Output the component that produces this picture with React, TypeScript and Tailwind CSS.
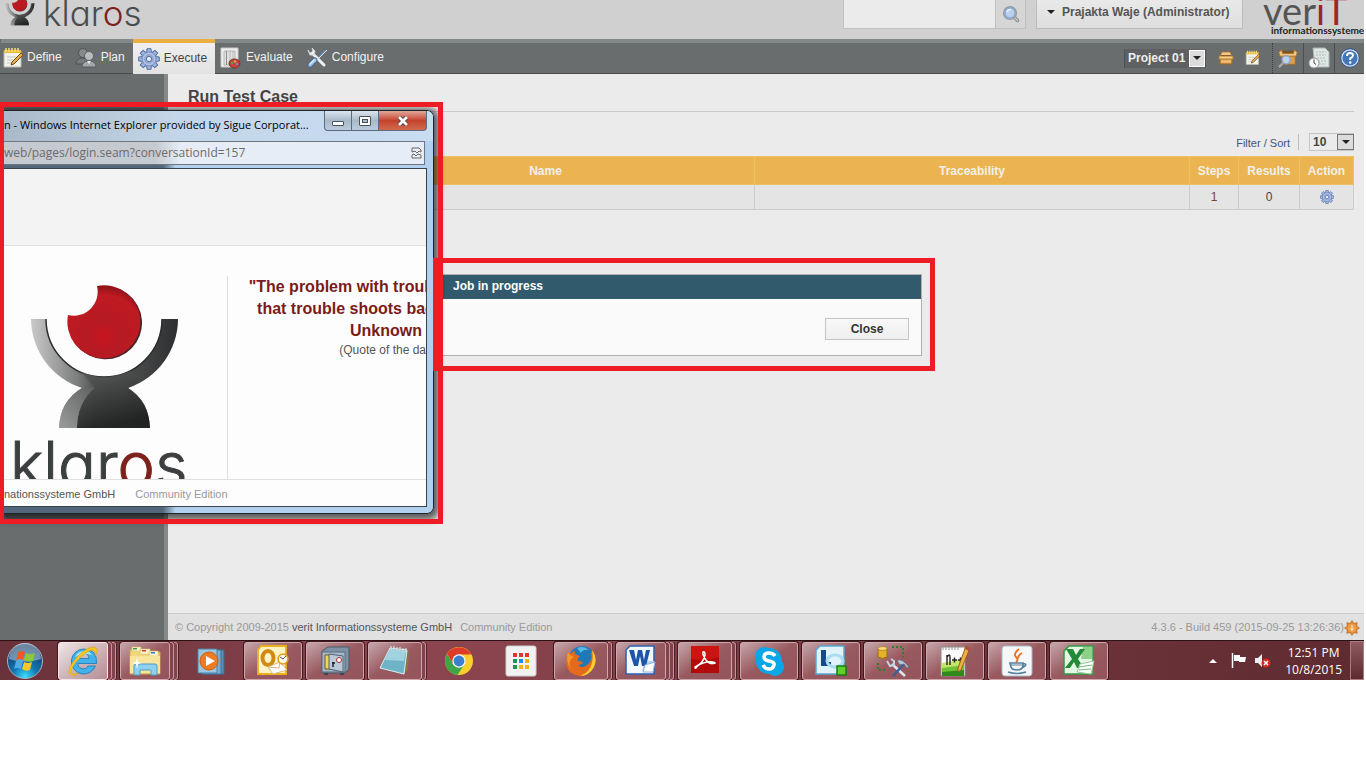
import React, { useId } from "react";

type IconProps = { className?: string };

/* ---------- logos ---------- */

function KlarosMark({ className }: IconProps) {
  const id = useId();
  return (
    <svg className={className} viewBox="0 0 149 146" aria-hidden="true">
      <defs>
        <radialGradient id={`${id}r`} cx="0.5" cy="0.7" r="0.75">
          <stop offset="0" stopColor="#c8141f" />
          <stop offset="0.3" stopColor="#b51a22" />
          <stop offset="0.75" stopColor="#c01a22" />
          <stop offset="1" stopColor="#7a1014" />
        </radialGradient>
        <linearGradient id={`${id}g`} x1="0" x2="1" y1="0" y2="0">
          <stop offset="0" stopColor="#c9c9c9" />
          <stop offset="0.32" stopColor="#7b7c7c" />
          <stop offset="0.42" stopColor="#555758" />
          <stop offset="0.75" stopColor="#444647" />
          <stop offset="1" stopColor="#2c2e2f" />
        </linearGradient>
        <linearGradient id={`${id}b`} x1="0" x2="0.3" y1="0" y2="1">
          <stop offset="0" stopColor="#5b5d5d" />
          <stop offset="1" stopColor="#1c1e1e" />
        </linearGradient>
        <linearGradient id={`${id}l`} x1="1" x2="0" y1="0" y2="1">
          <stop offset="0" stopColor="#606262" />
          <stop offset="1" stopColor="#9a9c9c" />
        </linearGradient>
      </defs>
      <path d="M67.500 3A36.500 36.500 0 1 1 38.500 33A24 24 0 0 0 67.500 3Z" fill="#3a0c0e" opacity="0.9" />
      <path d="M66 2A36.500 36.500 0 1 1 37 31A24 24 0 0 0 66 2Z" fill={`url(#${id}r)`} />
      <path d="M0 35H15A58 58 0 0 0 131 35H147A73 73 0 0 1 97 104Q118 117 119 144H28Q29 117 51 104A73 73 0 0 1 0 35Z" fill={`url(#${id}g)`} />
      <path d="M15 35A58 58 0 0 0 73 93A58 58 0 0 0 131 35" fill="none" stroke="#2b2d2d" strokeWidth="1.500" />
      <path d="M50 88L64 104Q46 119 46 144H119Q118 117 97 104Q104 101 110 97L100 87Q73 98 50 88Z" fill={`url(#${id}b)`} opacity="0.85" />
      <path d="M51 104H63Q46 119 46 144H28Q29 117 51 104Z" fill={`url(#${id}l)`} />
    </svg>
  );
}

function Wordmark({ className }: IconProps) {
  return (
    <span className={`font-['Inter',sans-serif] [font-feature-settings:'cv11'] ${className}`}>
      klar<span className="text-[#7d211d]">o</span>s
    </span>
  );
}

/* ---------- application icons ---------- */

function NoteIcon({ className }: IconProps) {
  return (
    <svg className={className} viewBox="0 0 22 22" aria-hidden="true">
      <path d="M3 4H20V20H3Z" fill="#f4f4ee" stroke="#b9b9ae" />
      <path d="M3 3H20V6H3Z" fill="#e9b93a" />
      <path d="M5 1V5M8 1V5M11 1V5M14 1V5M17 1V5" stroke="#fbe27a" strokeWidth="1.500" />
      <path d="M6 10H15M6 13H12M6 16H10" stroke="#c3c3c3" />
      <path d="M20 6L22 8L13 17L10 18L11 15Z" fill="#e7a846" stroke="#76501e" />
    </svg>
  );
}

function PeopleIcon({ className }: IconProps) {
  return (
    <svg className={className} viewBox="0 0 22 22" aria-hidden="true">
      <circle cx="8" cy="6" r="4.500" fill="#85898b" stroke="#505354" />
      <path d="M1 17Q1 11 8 11Q13 11 13 17Z" fill="#777b7d" stroke="#505354" />
      <circle cx="14" cy="9" r="4.500" fill="#b9bcbe" stroke="#606364" />
      <path d="M7 20Q7 14 14 14Q21 14 21 20Z" fill="#a4a7a9" stroke="#5a5d5e" />
      <path d="M12 14L14 17L16 14Z" fill="#eee" />
    </svg>
  );
}

function GearIcon({ className }: IconProps) {
  const teeth = [0, 45, 90, 135, 180, 225, 270, 315];
  return (
    <svg className={className} viewBox="0 0 22 22" aria-hidden="true">
      <g fill="#a3b5da" stroke="#4f6fa8" strokeWidth="1">
        {teeth.map((a) => (
          <path key={a} d="M8.500 5L9 0.700H13L13.500 5Z" transform={`rotate(${a} 11 11)`} />
        ))}
      </g>
      <circle cx="11" cy="11" r="7" fill="#b4c3e2" stroke="#6683b8" strokeWidth="0.800" />
      <circle cx="11" cy="11" r="5" fill="#93a9d4" />
      <circle cx="11" cy="11" r="2.600" fill="#eceef3" stroke="#4f6fa8" />
    </svg>
  );
}

function ReportIcon({ className }: IconProps) {
  return (
    <svg className={className} viewBox="0 0 22 22" aria-hidden="true">
      <path d="M1 1H18V20H1Z" fill="#efefef" stroke="#c9c9c9" />
      <path d="M4 4H15V18H4Z" fill="#e0e0e0" stroke="#b5b5b5" />
      <path d="M6.500 4V18" stroke="#8d8d8d" />
      <path d="M10 4V18M13 4V18" stroke="#bcbcbc" />
      <ellipse cx="14.500" cy="16.500" rx="5.500" ry="4.500" fill="#c4433c" stroke="#7c2a28" />
      <circle cx="12" cy="16" r="1.200" fill="#5aa145" />
      <circle cx="15" cy="14.500" r="1.200" fill="#e9a24a" />
      <circle cx="17" cy="17" r="1.200" fill="#6a8bd0" />
    </svg>
  );
}

function ToolsIcon({ className }: IconProps) {
  return (
    <svg className={className} viewBox="0 0 22 22" aria-hidden="true">
      <path d="M20 3L11 12" stroke="#5e87b8" strokeWidth="1.800" />
      <path d="M21 3L12 12" stroke="#dfe8f2" strokeWidth="1" />
      <path d="M6 6L18 18" stroke="#f0f0f0" strokeWidth="3" strokeLinecap="round" />
      <path d="M2 3L4 8L8 8L9 4L6 1L7 4L5 6L3 5Z" fill="#f0f0f0" stroke="#d3d3d3" />
      <path d="M4 18L9 13" stroke="#38699f" strokeWidth="5" strokeLinecap="round" />
      <path d="M4 18L9 13" stroke="#a4c4e6" strokeWidth="3.200" strokeLinecap="round" />
      <path d="M4 17L8 13" stroke="#e4eefa" strokeWidth="1.200" strokeLinecap="round" />
    </svg>
  );
}

function BoxIcon({ className }: IconProps) {
  return (
    <svg className={className} viewBox="0 0 16 16" aria-hidden="true">
      <path d="M2 7L4 2H12L14 7V13Q14 14 13 14H3Q2 14 2 13Z" fill="#d9a04f" stroke="#9b6a24" />
      <path d="M4 2.500H12L13 5H3Z" fill="#f0c888" />
      <path d="M3 5H13V6H3Z" fill="#5d4018" />
      <path d="M1 6H15V9H1Z" fill="#f4cd8c" stroke="#b07a2e" />
      <path d="M3 11.500H13" stroke="#efc27c" strokeWidth="2" />
    </svg>
  );
}

function BoxSearchIcon({ className }: IconProps) {
  return (
    <svg className={className} viewBox="0 0 22 22" aria-hidden="true">
      <path d="M4 8V18H19V8Z" fill="#d9a04f" stroke="#9b6a24" />
      <path d="M4 3H18L17 6H5Z" fill="#7b5421" />
      <path d="M1 5L4 2L5 6H17L18 2L21 5L20 9H2Z" fill="#f1c680" stroke="#a8732a" />
      <path d="M5 17L1 21" stroke="#a9a9a9" strokeWidth="2.500" />
      <circle cx="9" cy="13" r="4.500" fill="#b8d2f0" stroke="#8aa3c6" strokeWidth="1.500" />
    </svg>
  );
}

function ClockPageIcon({ className }: IconProps) {
  return (
    <svg className={className} viewBox="0 0 22 22" aria-hidden="true">
      <path d="M5 1H17L21 5V20H7Z" fill="#dfe7e5" stroke="#a9b6b4" />
      <path d="M8 5H18M8 8H18M9 11H18M10 14H18M11 17H18" stroke="#a7bdb8" strokeDasharray="2 1" />
      <circle cx="6" cy="16" r="5" fill="#f7f7f7" stroke="#9c9c9c" />
      <path d="M6 12.500V16L8 17.500" fill="none" stroke="#444" />
    </svg>
  );
}

function HelpIcon({ className }: IconProps) {
  return (
    <svg className={className} viewBox="0 0 20 20" aria-hidden="true">
      <circle cx="10" cy="10" r="9.300" fill="#d5e3f5" stroke="#284f8c" />
      <circle cx="10" cy="10" r="7.600" fill="#4477b8" />
      <path d="M7 8Q7 5 10 5Q13 5 13 7.500Q13 9 10.200 10.300V12" fill="none" stroke="#fff" strokeWidth="1.900" />
      <circle cx="10.200" cy="14.500" r="1.200" fill="#fff" />
    </svg>
  );
}

function SearchIcon({ className }: IconProps) {
  return (
    <svg className={className} viewBox="0 0 18 18" aria-hidden="true">
      <path d="M12 12L15.500 15.500" stroke="#8b8b8b" strokeWidth="3.500" strokeLinecap="round" />
      <path d="M12 12L15.500 15.500" stroke="#c9c9c9" strokeWidth="1.500" strokeLinecap="round" />
      <circle cx="8" cy="8" r="6.300" fill="#b7cfea" stroke="#969ba2" strokeWidth="1.600" />
      <circle cx="8" cy="8" r="5" fill="none" stroke="#7ba0d0" />
      <path d="M5 7Q6 4.500 9 4.500" fill="none" stroke="#eef5fd" strokeWidth="1.500" />
    </svg>
  );
}

function SunIcon({ className }: IconProps) {
  return (
    <svg className={className} viewBox="0 0 16 16" aria-hidden="true">
      {[0, 45, 90, 135, 180, 225, 270, 315].map((a) => (
        <path key={a} d="M5 5L8 0.500L11 5Z" fill="#e58a32" stroke="#b5621b" strokeWidth="0.600" transform={`rotate(${a} 8 8)`} />
      ))}
      <circle cx="8" cy="8" r="4.700" fill="#ee9b44" />
      <path d="M8 5V10M6.500 8.500L8 10.500L9.500 8.500" stroke="#fff2d8" fill="none" />
    </svg>
  );
}

function DownArrow({ className }: IconProps) {
  return (
    <svg className={className} viewBox="0 0 8 4" aria-hidden="true">
      <path d="M0 0H8L4 4Z" fill="#222" />
    </svg>
  );
}

/* ---------- taskbar icons (32 × 32) ---------- */

const taskIcons: Record<string, React.ReactNode> = {
  "Internet Explorer": (
    <>
      <path d="M16.500 4A12.500 12.500 0 1 0 28.500 21H21A5.500 5.500 0 0 1 10.700 18.500H29.500Q30.500 4 16.500 4ZM10.700 13.500A5.500 5.500 0 0 1 22 13.500Z" fill="#43b2ea" stroke="#1779b8" strokeWidth="0.800" fillRule="evenodd" />
      <path d="M8 12Q11 6 17 6Q23 6 25 10Q17 7 8 12Z" fill="#a6e0fa" />
      <path d="M4 30Q-2 26 10 12Q23 -1 29 3Q32 6 28 11Q29 5 25 5Q19 6 9 17Q2 26 5 28.500Q8 30 12 28Q7 32 4 30Z" fill="#f8c81c" stroke="#d09a06" strokeWidth="0.500" />
    </>
  ),
  "File Explorer": (
    <>
      <path d="M1 5H10L12 7H31V29H1Z" fill="#f0d77e" stroke="#c9a548" />
      <path d="M3 2H12V6H3ZM11 4H21V9H11ZM20 6H29V11H20Z" fill="#fff6d0" stroke="#d8bd68" strokeWidth="0.600" />
      <path d="M4 3H8V4.500H4Z" fill="#2aa13a" />
      <path d="M13 5H17V6.500H13Z" fill="#d5382a" />
      <path d="M22 7H26V8.500H22Z" fill="#2a7ad5" />
      <path d="M1 11H31V28H1Z" fill="#f7e59c" />
      <path d="M5 30V21Q5 19 7 19H26Q28 19 28 21V30H22V25H11V30Z" fill="#8ed0ef" stroke="#4e9bc8" />
      <path d="M8 12L9 17L13 18L9 19L8 24L7 19L3 18L7 17Z" fill="#fff" />
    </>
  ),
  "Media Player": (
    <>
      <path d="M11 5H29V29H11Z" fill="#5a8fb5" stroke="#35698f" />
      <path d="M7 5H26V29H7Z" fill="#79add0" stroke="#3e7399" />
      <path d="M3 4H22V28H3Z" fill="#9cc6e0" stroke="#4a80a5" />
      <circle cx="14" cy="16" r="9" fill="#ee7a22" stroke="#d05d10" />
      <path d="M11 11L20 16L11 21Z" fill="#fff" />
    </>
  ),
  Outlook: (
    <>
      <path d="M4 1H29V29H1V5Z" fill="#fff2c4" stroke="#eab11c" strokeWidth="1.800" />
      <ellipse cx="11" cy="13" rx="5.500" ry="7" fill="none" stroke="#cf8a14" strokeWidth="4" />
      <path d="M11 22L23 17L30 25L16 29Z" fill="#fff" stroke="#d8b878" />
      <path d="M11 22L22 23L23 17" fill="none" stroke="#d8b878" />
      <circle cx="26" cy="14" r="5" fill="#fff8e4" stroke="#e0991c" strokeWidth="1.500" />
      <path d="M26 14L29 11M26 14L23 12" fill="none" stroke="#555" />
    </>
  ),
  Safe: (
    <>
      <path d="M3 6L9 2H30V24L26 28H3Z" fill="#7d92a6" stroke="#4a5a69" />
      <path d="M3 7H26V27H3Z" fill="#a5b7c8" stroke="#5b6c7c" />
      <path d="M6 10H14V24H6Z" fill="#f4d35a" stroke="#6c5b1f" />
      <path d="M10 9L24 11V27L10 24Z" fill="#b9c9d7" stroke="#526373" />
      <circle cx="20" cy="15" r="2.500" fill="#fff" stroke="#a82e2e" />
      <path d="M14 17V22M13 18H16" stroke="#222" strokeWidth="1.500" />
      <path d="M5 28H9V30H5ZM21 28H25V30H21Z" fill="#384552" />
    </>
  ),
  Notepad: (
    <>
      <path d="M13 3L30 6L29 25L24 29L3 23Z" fill="#8c7544" />
      <path d="M11 3L28 5L25 29L1 23Z" fill="#6fb4c6" stroke="#d8f0f5" />
      <path d="M11 4L27 6L25 16L6 15Z" fill="#b3e0e9" opacity="0.7" />
      <path d="M12 1V5M15 1V5M18 2V6M21 2V6M24 3V7M27 3V7" stroke="#ddd" strokeWidth="1.200" />
    </>
  ),
  Chrome: (
    <>
      <circle cx="16" cy="16" r="14" fill="#f9cf2c" />
      <path d="M4 8.700A14 14 0 0 0 14.500 30L21 20L16 22L10 19Z" fill="#3fa648" />
      <path d="M16 9.500H28.200A14 14 0 0 0 4 8.700L10.500 19.500Z" fill="#de3b2b" />
      <circle cx="16" cy="16" r="6.700" fill="#f4f4f4" />
      <circle cx="16" cy="16" r="5.400" fill="#3b7fd0" />
    </>
  ),
  "Chrome Apps": (
    <>
      <rect x="1" y="1" width="30" height="30" rx="2" fill="#f2f2f2" stroke="#cfcfcf" />
      <path d="M8 8H12V12H8ZM14 8H18V12H14ZM20 8H24V12H20Z" fill="#e6342a" />
      <path d="M8 14H12V18H8ZM8 20H12V24H8Z" fill="#14994f" />
      <path d="M14 14H18V18H14Z" fill="#1b8cf0" />
      <path d="M20 14H24V18H20ZM14 20H18V24H14ZM20 20H24V24H20Z" fill="#fbaf17" />
    </>
  ),
  Firefox: (
    <>
      <circle cx="17" cy="14" r="13" fill="#1f78b8" />
      <path d="M12 3Q19 0 24 5Q18 4 16 8Z" fill="#5bb9e6" />
      <path d="M27 5Q33 13 29 22Q24 31 15 31Q5 30 2 22Q0 14 3 7L5 9Q8 6 10 6Q9 9 12 10L15 11Q12 13 13 16Q17 16 18 18Q16 20 13 20Q17 24 22 20Q28 15 26 9Z" fill="#e66a1c" />
      <path d="M27 5Q33 13 29 22Q24 31 15 31Q23 28 26 21Q29 13 27 5Z" fill="#f8cf31" />
      <path d="M3 7Q0 16 6 24Q2 15 9 12Q5 11 3 7Z" fill="#f39a2c" />
    </>
  ),
  Word: (
    <>
      <path d="M5 1H29V29H1V5Z" fill="#f3f8ff" stroke="#2a62b5" strokeWidth="1.500" />
      <path d="M20 16H29V26H17Z" fill="#b9d2f2" />
      <path d="M4 5H9L11 15L13 5H17L19 15L21 5H25L21 21H17L15 11L13 21H9Z" fill="#1d55a8" />
      <path d="M20 20L30 17L28 27L18 27Z" fill="#fff" stroke="#8fb0dd" />
    </>
  ),
  "Adobe Reader": (
    <>
      <path d="M2 1H30V28H2Z" fill="#b30b0b" />
      <path d="M2 1H30V12Q16 16 2 14Z" fill="#e01b16" opacity="0.6" />
      <path d="M6 22Q14 19 16 10Q16 6 14 7Q13 9 17 15Q21 20 26 18Q25 16 18 17Q9 19 7 23Q6 24 6 22Z" fill="none" stroke="#fff" strokeWidth="1.500" />
    </>
  ),
  Skype: (
    <>
      <circle cx="11" cy="11" r="9" fill="#0aa7e8" />
      <circle cx="22" cy="22" r="9" fill="#0aa7e8" />
      <circle cx="16" cy="16" r="13" fill="#0aa7e8" />
      <path d="M22 11Q20 8 16 8Q11 8 11 12Q11 15 16 16Q22 17 21 20Q20 24 16 24Q12 24 10 20" fill="none" stroke="#fff" strokeWidth="3.500" />
    </>
  ),
  Lync: (
    <>
      <path d="M5 1H29V29H1V5Z" fill="#e0f3fb" stroke="#57a9cf" strokeWidth="1.500" />
      <path d="M6 5H11V17H16V21H6Z" fill="#174a88" />
      <ellipse cx="20" cy="16" rx="8" ry="6" fill="none" stroke="#a9dcf0" strokeWidth="3" />
      <path d="M22 21H31V30H22Z" fill="#5fd22a" stroke="#1d7a10" strokeWidth="1.500" />
    </>
  ),
  "System Tools": (
    <>
      <path d="M1 4V12Q6 15 10 12V4Z" fill="#e5b02b" stroke="#946c10" />
      <ellipse cx="5.500" cy="3.500" rx="4.500" ry="2" fill="#f8d976" stroke="#946c10" strokeWidth="0.600" />
      <path d="M15 2H26V12M1 18V25H10" fill="none" stroke="#2d7d2e" strokeWidth="1.800" strokeDasharray="2 2" />
      <path d="M15 19L28 31" stroke="#dfe5ee" strokeWidth="2.500" />
      <path d="M10 16L13 21L17 20L17 16L14 14" fill="none" stroke="#c7d2e0" strokeWidth="2" />
      <path d="M27 19L16 31" stroke="#3a5f9a" strokeWidth="2.500" />
      <path d="M20 16Q24 12 32 22L30 23L27 19L23 20Z" fill="#b9c6d6" stroke="#5a6b7f" strokeWidth="0.800" />
    </>
  ),
  "Notepad++": (
    <>
      <path d="M2 2H26V31H2Z" fill="#fafafa" stroke="#8c8c8c" />
      <path d="M3 18L25 14V31H3Z" fill="#c3e66a" />
      <path d="M3 23L25 20V31H3Z" fill="#6fc236" />
      <path d="M3 27L25 25V31H3Z" fill="#2f8a1c" />
      <path d="M4 2V5M7 2V5M10 2V5M13 2V5M16 2V5M19 2V5" stroke="#999" />
      <path d="M8 20V10M8 12Q11 8 11 12V20M13 15H18M15.500 12.500V17.500M19 15H24M21.500 12.500V17.500" fill="none" stroke="#222" strokeWidth="1.400" />
      <path d="M27 1L31 3L22 25L19 27V23Z" fill="#f0b043" stroke="#94611c" />
      <path d="M27 1L31 3L30 6L26 4Z" fill="#b44a42" />
    </>
  ),
  Java: (
    <>
      <rect x="1" y="1" width="30" height="30" rx="3" fill="#f5f7f9" stroke="#a9bccd" />
      <path d="M18 4Q12 9 15 12Q18 15 15 17M21 8Q16 11 18 13" fill="none" stroke="#e8742a" strokeWidth="1.900" />
      <path d="M9 18H22V21Q21 25 16 25Q11 25 10 22ZM22 19Q26 18 24 21L21 23M7 27Q16 30 25 27" fill="none" stroke="#55819f" strokeWidth="1.700" />
      <path d="M10 20H21" stroke="#55819f" />
    </>
  ),
  Excel: (
    <>
      <path d="M6 1H30V29H1V6Z" fill="#e6f6e4" stroke="#2f9a45" strokeWidth="1.500" />
      <path d="M20 2H29V14H18Z" fill="#8ed08a" />
      <path d="M3 4H10L13 10L17 4H22L15 14L21 23H14L11 17L7 23H2L9 14Z" fill="#238b38" />
      <path d="M17 19L31 16L28 29L14 27Z" fill="#fff" stroke="#98c79a" />
      <path d="M16 22L29 20M16 25L28 24" stroke="#6fbb74" />
    </>
  ),
};

type TaskState = "single" | "stack" | "stack3" | "pinned";

const tasks: { name: string; state: TaskState; active?: boolean }[] = [
  { name: "Internet Explorer", state: "stack3", active: true },
  { name: "File Explorer", state: "stack3" },
  { name: "Media Player", state: "pinned" },
  { name: "Outlook", state: "single" },
  { name: "Safe", state: "single" },
  { name: "Notepad", state: "stack" },
  { name: "Chrome", state: "pinned" },
  { name: "Chrome Apps", state: "pinned" },
  { name: "Firefox", state: "stack" },
  { name: "Word", state: "stack3" },
  { name: "Adobe Reader", state: "stack" },
  { name: "Skype", state: "single" },
  { name: "Lync", state: "single" },
  { name: "System Tools", state: "single" },
  { name: "Notepad++", state: "single" },
  { name: "Java", state: "single" },
  { name: "Excel", state: "single" },
];

function TaskButton({ name, state, active }: { name: string; state: TaskState; active?: boolean }) {
  const glyph = (
    <svg className="size-8" viewBox="0 0 32 32" aria-hidden="true">
      {taskIcons[name]}
    </svg>
  );
  if (state === "pinned") {
    return (
      <button aria-label={name} className="flex h-[39px] w-[62px] items-center justify-center pr-1">
        {glyph}
      </button>
    );
  }
  const edge = "h-[38px] w-1 rounded-r-[3px] border-y border-r border-[#c4959b] bg-[#84434c] shadow-[1px_0_0_0_#4d1f26]";
  return (
    <button aria-label={name} className="flex h-[39px] w-[62px] items-center pr-1">
      <span
        className={`flex h-[38px] flex-1 items-center justify-center rounded-[3px] border shadow-[0_0_0_1px_#42181e] ${
          active
            ? "border-[#f3e6e8] bg-linear-to-br from-[#efe6e7] via-[#cfb6b9] to-[#b48e93]"
            : "border-[#cda7ab] bg-linear-to-br from-[#c4a6aa] via-[#98595f] to-[#95545c]"
        }`}
      >
        {glyph}
      </span>
      {state !== "single" && <span className={edge} />}
      {state === "stack3" && <span className={edge} />}
    </button>
  );
}

/* ---------- page ---------- */

const tabs = [
  { label: "Define", Icon: NoteIcon },
  { label: "Plan", Icon: PeopleIcon },
  { label: "Execute", Icon: GearIcon },
  { label: "Evaluate", Icon: ReportIcon },
  { label: "Configure", Icon: ToolsIcon },
];

function TopBar() {
  return (
    <header className="flex h-[39px] items-start overflow-hidden bg-[#d0d0d0]">
      <a href="#home" className="flex items-start" aria-label="klaros">
        <KlarosMark className="-mt-1 ml-[5px] h-[30px] w-[30px] shrink-0" />
        <Wordmark className="-mt-1.5 ml-2 text-[35px] leading-[38px] font-light text-[#4a4d4e]" />
      </a>
      <div className="ml-auto flex">
        <input aria-label="Search" className="h-[29px] w-[153px] border border-t-0 border-[#c0c0c0] bg-[#ebebeb] px-2 text-[12px] outline-none" />
        <button aria-label="Search" className="flex h-[29px] w-[30px] items-center justify-center border-r border-b border-[#c0c0c0] bg-[#d6d6d6]">
          <SearchIcon className="size-[18px]" />
        </button>
      </div>
      <button className="ml-2.5 flex h-[29px] w-[207px] items-center border border-t-0 border-[#bcbcbc] bg-linear-to-b from-[#e9e9e9] to-[#dedede] pb-1 pl-2.5 text-[12px] font-bold text-[#555]">
        <DownArrow className="mr-[7px] h-1 w-2" />
        Prajakta Waje (Administrator)
      </button>
      <a href="#verit" className="ml-5 flex w-[101px] flex-col">
        <span className="-mt-2 font-['Lato',sans-serif] text-[38px] leading-[36px] text-[#555]">
          ver<span className="text-[#a0222c]">iT</span>
        </span>
        <span className="-mt-1 pl-2 font-['Lato',sans-serif] text-[10px] leading-3 font-bold whitespace-nowrap text-[#222]">informationssysteme</span>
      </a>
    </header>
  );
}

function NavBar() {
  return (
    <div className="flex h-[35px] border-b border-[#4b4b4b] bg-[#696d6e]">
      <nav className="flex border-l border-[#696d6e]">
        {tabs.map(({ label, Icon }, i) => (
          <a
            key={label}
            href={`#${label.toLowerCase()}`}
            className={`flex items-center gap-1 border-t-4 pr-2 text-[12px] ${i === 0 ? "" : "pl-[5px]"} ${
              i === 2 ? "-mb-px border-[#eaae42] bg-linear-to-b from-[#efefef] to-[#e2e2e2] text-[#444]" : "border-[#838889] text-[#f2f2f2]"
            }`}
          >
            <Icon className="size-[22px]" />
            <span className="pb-0.5">{label}</span>
          </a>
        ))}
      </nav>
      <div className="flex flex-1 items-stretch justify-end border-t-4 border-[#838889]">
        <div className="relative mr-3 flex items-center">
          <select aria-label="Project" className="h-[19px] w-[82px] appearance-none border-x border-[#4f5152] bg-[#5e6061] pl-[3px] text-[12px] font-bold text-[#eee]">
            <option>Project 01</option>
          </select>
          <span className="pointer-events-none absolute right-px flex h-[17px] w-4 items-center justify-center border border-white bg-[#dcdcdc]">
            <DownArrow className="h-1 w-2" />
          </span>
        </div>
        <button aria-label="Open project" className="flex items-center">
          <BoxIcon className="size-4" />
        </button>
        <button aria-label="Edit notes" className="mr-3 ml-2.5 flex items-center">
          <NoteIcon className="size-4" />
        </button>
        <button aria-label="Find item" className="flex w-[31px] items-center justify-center border-l border-dotted border-[#3c3e3f]">
          <BoxSearchIcon className="size-5" />
        </button>
        <button aria-label="Schedule" className="flex w-[31px] items-center justify-center border-l border-[#4b4d4e]">
          <ClockPageIcon className="size-[22px]" />
        </button>
        <button aria-label="Help" className="flex w-[30px] items-center justify-center border-l border-[#4b4d4e]">
          <HelpIcon className="size-5" />
        </button>
      </div>
    </div>
  );
}

function Content() {
  const head = "border border-[#efbf66] bg-[#ebb450] font-bold text-[#f2f0ea]";
  const cell = "border border-[#cbcbcb] bg-[#e4e4e4]";
  return (
    <main className="flex-1 px-5 pr-2.5 text-[#444]">
      <h1 className="border-b border-[#cbcbcb] pt-3 pb-1 text-[16px] leading-[21px] font-bold">Run Test Case</h1>
      <div className="mt-5 mb-[5px] flex h-[19px] items-center justify-end">
        <a href="#filter" className="mt-1 mr-2 text-[11px] text-[#3d5578]">
          Filter / Sort
        </a>
        <span className="mr-2.5 h-4 w-px bg-[#bdbdbd]" />
        <span className="relative flex items-center">
          <select aria-label="Rows per page" className="h-[18px] w-[45px] appearance-none border border-[#c6c6c6] bg-[#ebebeb] pl-[3px] text-[12px] leading-4 font-bold">
            <option>10</option>
          </select>
          <span className="pointer-events-none absolute right-0 flex h-4 w-[17px] items-center justify-center border border-[#777] bg-[#dcdcdc]">
            <DownArrow className="h-1 w-2" />
          </span>
        </span>
      </div>
      <table className="w-full table-fixed border-collapse text-center text-[12px]">
        <colgroup>
          <col className="w-[148px]" />
          <col />
          <col className="w-[435px]" />
          <col className="w-[49px]" />
          <col className="w-[61px]" />
          <col className="w-[54px]" />
        </colgroup>
        <thead>
          <tr className="h-7">
            <th className={head} aria-label="ID" />
            <th className={head}>Name</th>
            <th className={head}>Traceability</th>
            <th className={head}>Steps</th>
            <th className={head}>Results</th>
            <th className={head}>Action</th>
          </tr>
        </thead>
        <tbody>
          <tr className="h-[25px]">
            <td className={cell} />
            <td className={cell} />
            <td className={cell} />
            <td className={`${cell} text-[#7a3f36]`}>1</td>
            <td className={cell}>0</td>
            <td className={cell}>
              <button aria-label="Execute test case" className="mx-auto block">
                <GearIcon className="size-3.5" />
              </button>
            </td>
          </tr>
        </tbody>
      </table>
    </main>
  );
}

function LoginWindow() {
  const control = "flex h-5 items-center justify-center border border-t-0 border-[#5d6b7a]";
  return (
    <section
      aria-label="Windows Internet Explorer"
      className="absolute top-[110px] left-1 flex h-[404px] w-[430px] flex-col overflow-hidden rounded-r-[7px] border border-l-0 border-[#1c242c] bg-linear-to-r from-[#52677b] from-[37%] to-[#b3d0ee] to-[40%] shadow-[1px_2px_6px_4px_rgba(0,0,0,0.6)]"
    >
      <div className="flex h-[30px] shrink-0 items-start justify-between bg-linear-to-r from-[#aab9c8] via-[#c3d5e8] via-40% to-[#c8dcf2] pr-1.5">
        <h2 className="min-w-0 font-['Open_Sans','Noto_Sans',sans-serif] text-[11px] leading-7 whitespace-nowrap text-black">
          n - Windows Internet Explorer provided by Sigue Corporat...
        </h2>
        <div className="flex shrink-0">
          <button aria-label="Minimize" className={`${control} w-7 rounded-bl-[4px] bg-linear-to-b from-[#dbe5ef] via-[#a9b9ca] to-[#b9cbdc]`}>
            <span className="mt-1.5 h-[5px] w-3 rounded-[1px] border border-[#48505c] bg-white" />
          </button>
          <button aria-label="Maximize" className={`${control} w-[27px] border-l-0 bg-linear-to-b from-[#dbe5ef] via-[#a9b9ca] to-[#b9cbdc]`}>
            <span className="flex h-2.5 w-3 items-center justify-center rounded-[1px] border border-[#48505c] bg-white">
              <span className="h-1 w-1.5 border border-[#48505c] bg-[#a9b9ca]" />
            </span>
          </button>
          <button aria-label="Close window" className={`${control} w-12 rounded-br-[4px] border-l-0 bg-linear-to-b from-[#e0a79b] via-[#c4422c] to-[#d0694f]`}>
            <svg className="h-2.5 w-3" viewBox="0 0 12 10" aria-hidden="true">
              <path d="M2 1L10 9M10 1L2 9" stroke="#4a3c40" strokeWidth="4.500" />
              <path d="M2 1L10 9M10 1L2 9" stroke="#fff" strokeWidth="2.800" />
            </svg>
          </button>
        </div>
      </div>
      <div className="mr-2 flex h-6 shrink-0 items-center justify-between border border-l-0 border-[#6e7781] bg-linear-to-r from-[#c5c9d0] from-[36%] to-[#e6edf6] to-[42%] pr-0.5 font-['Open_Sans','Noto_Sans',sans-serif] text-[12px] text-[#6c6c6c]">
        <span>web/pages/login.seam?conversationId=157</span>
        <svg className="h-3 w-[11px]" viewBox="0 0 11 12" aria-hidden="true">
          <path d="M1 5V1H8L10 3V5L8 4L6 6L4 4ZM1 8L3 7L5 9L7 7L10 8V11H1Z" fill="#eee" stroke="#666" />
        </svg>
      </div>
      <div className="mt-[3px] mr-1.5 mb-1.5 flex flex-1 flex-col overflow-hidden border border-l-0 border-[#39434d] bg-[#fdfdfd]">
        <div className="h-[77px] shrink-0 border-b border-[#e0e0e0] bg-[#f3f3f3]" />
        <div className="flex h-[234px] shrink-0 overflow-hidden border-b border-[#e0e0e0] pt-[30px]">
          <div className="flex w-[224px] shrink-0 flex-col border-r border-[#e0e0e0] pt-2 pl-[27px]">
            <KlarosMark className="h-[146px] w-[149px] shrink-0" />
            <Wordmark className="-ml-[21px] text-[63px] leading-[68px] font-light text-[#3c3f40] [-webkit-text-stroke:1px]" />
          </div>
          <div className="-mr-2 flex-1 text-right whitespace-nowrap">
            <blockquote className="text-[16px] leading-[22px] font-bold text-[#7a1b18]">
              "The problem with troub
              <br />
              that trouble shoots bac
              <br />
              <span className="pr-3">Unknown</span>
            </blockquote>
            <p className="pr-2 text-[12px] leading-4 text-[#555]">(Quote of the da</p>
          </div>
        </div>
        <p className="flex flex-1 items-center gap-5 pt-0.5 text-[11px] text-[#999]">
          <span className="text-[#555]">nationssysteme GmbH</span>
          <span>Community Edition</span>
        </p>
      </div>
    </section>
  );
}

function JobDialog() {
  return (
    <section role="dialog" aria-label="Job in progress" className="absolute top-[274px] left-[443px] w-[479px] border border-l-0 border-[#b0b0b0] bg-[#fafafa]">
      <h2 className="h-6 bg-[#315a6d] pl-2.5 text-[12px] leading-[22px] font-bold text-white">Job in progress</h2>
      <div className="flex h-14 items-center justify-end pr-3 pb-px">
        <button className="mt-1 h-[22px] w-[84px] border border-[#c4c4c4] bg-linear-to-b from-[#f8f8f8] to-[#efefef] text-[12px] leading-5 font-bold text-[#333]">Close</button>
      </div>
    </section>
  );
}

function Taskbar() {
  return (
    <div className="flex h-10 items-center overflow-hidden border-t border-[#2c1215] bg-linear-to-r from-[#69323a] via-[#8d4650] via-30% to-[#5e2b30] font-['Open_Sans','Noto_Sans',sans-serif] text-white">
      <button aria-label="Start" className="flex w-[58px] shrink-0 items-center pl-1.5">
        <svg className="size-[38px]" viewBox="0 0 38 38" aria-hidden="true">
          <defs>
            <radialGradient id="orb" cx="0.5" cy="0.95" r="0.85">
              <stop offset="0" stopColor="#3ae0ff" />
              <stop offset="0.4" stopColor="#1378b4" />
              <stop offset="1" stopColor="#163a63" />
            </radialGradient>
          </defs>
          <circle cx="19" cy="19" r="17.500" fill="url(#orb)" stroke="#9fb6c9" />
          <path d="M3 17A16 16 0 0 1 35 17Q19 22 3 17Z" fill="#d7e4ee" opacity="0.45" />
          <path d="M12 10Q15 8 19 10L17 18Q14 16 10 18Z" fill="#ee5a24" />
          <path d="M20 11Q24 13 29 11L27 19Q22 21 18 18Z" fill="#8cc83c" />
          <path d="M10 19Q13 17 17 19L15 27Q11 25 8 27Z" fill="#53a8e8" />
          <path d="M18 20Q22 22 26 20L24 28Q20 30 16 27Z" fill="#fbc52c" />
        </svg>
      </button>
      <div className="flex shrink-0">
        {tasks.map((t) => (
          <TaskButton key={t.name} {...t} />
        ))}
      </div>
      <div className="ml-auto flex h-full items-center">
        <button aria-label="Show hidden icons" className="mr-3.5">
          <svg className="h-1 w-2" viewBox="0 0 8 4" aria-hidden="true">
            <path d="M0 4H8L4 0Z" fill="#fff" />
          </svg>
        </button>
        <svg className="mr-2 h-[15px] w-4" viewBox="0 0 16 15" aria-hidden="true">
          <path d="M1.500 0V15" stroke="#fff" strokeWidth="1.500" />
          <path d="M3 2H9V4H15L14 9H8V8H3Z" fill="#fff" />
        </svg>
        <svg className="mr-3.5 h-[15px] w-4" viewBox="0 0 16 15" aria-hidden="true">
          <path d="M0 5H3L7 1V14L3 10H0Z" fill="#eee" />
          <circle cx="11" cy="10" r="4.500" fill="#d8261e" />
          <path d="M9 8L13 12M13 8L9 12" stroke="#fff" strokeWidth="1.500" />
        </svg>
        <p className="mr-2 text-center text-[12px] leading-[17px]">
          12:51 PM
          <br />
          10/8/2015
        </p>
        <button aria-label="Show desktop" className="h-full w-3.5 border border-[#a87c80] bg-linear-to-b from-[#8f5c61] to-[#5e2a2f]" />
      </div>
    </div>
  );
}

export default function App() {
  return (
    <div className="relative mr-0.5 overflow-hidden font-['Liberation_Sans',Arial,sans-serif]">
      <TopBar />
      <NavBar />
      <div className="flex min-h-[566px] bg-[#ebebeb]">
        <aside className="w-[168px] shrink-0 border-r-4 border-[#838889] bg-[#696d6e]" />
        <div className="flex min-w-0 flex-1 flex-col">
          <Content />
          <footer className="flex h-[27px] items-center border-t border-[#cccccc] bg-[#e1e1e1] px-[7px] pr-1 text-[11px] text-[#999]">
            <span>© Copyright 2009-2015&nbsp;</span>
            <a href="#company" className="text-[#555]">
              verit Informationssysteme GmbH
            </a>
            <span className="ml-2">Community Edition</span>
            <span className="ml-auto">4.3.6 - Build 459 (2015-09-25 13:26:36)</span>
            <SunIcon className="mt-0.5 size-4" />
          </footer>
        </div>
      </div>
      <Taskbar />
      <JobDialog />
      <LoginWindow />
      <div className="pointer-events-none absolute top-[102px] left-0 h-[422px] w-[443px] border-[5px] border-l-4 border-[#ee1c24]" />
      <div className="pointer-events-none absolute top-[258px] left-[433px] h-[113px] w-[502px] border-[5px] border-[#ee1c24]" />
    </div>
  );
}
